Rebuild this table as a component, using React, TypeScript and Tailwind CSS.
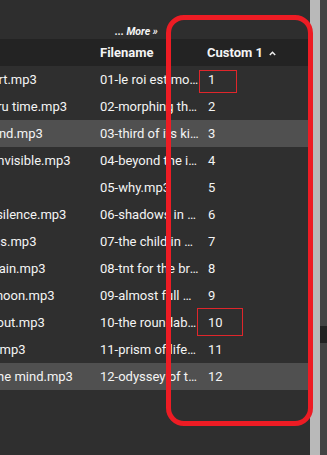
const tracks = [
  { name: "01-le roi est mort.mp3", n: 1 },
  { name: "02-morphing thru time.mp3", n: 2 },
  { name: "03-third of its kind.mp3", n: 3, active: true },
  { name: "04-beyond the invisible.mp3", n: 4 },
  { name: "05-why.mp3", n: 5 },
  { name: "06-shadows in silence.mp3", n: 6 },
  { name: "07-the child in us.mp3", n: 7 },
  { name: "08-tnt for the brain.mp3", n: 8 },
  { name: "09-almost full moon.mp3", n: 9 },
  { name: "10-the roundabout.mp3", n: 10 },
  { name: "11-prism of life.mp3", n: 11 },
  { name: "12-odyssey of the mind.mp3", n: 12, active: true },
];

const CaretUp = () => (
  <svg width="7" height="5" viewBox="0 0 7 5" className="ml-[6px] mt-[1px]">
    <polyline points="0.8,4 3.5,1.3 6.2,4" fill="none" stroke="#f2f2f2" strokeWidth="1.4" />
  </svg>
);

const App = () => {
  return (
    <div className="relative flex w-[327px] h-[455px] overflow-hidden bg-[#2f2f2f] font-['Roboto',sans-serif] text-[#f4f4f4]">
      <div className="flex flex-col w-[310px]">
        <div className="h-[39px] bg-[#2e2e2e] pl-[115px] pt-[18px]">
          <span className="text-[10.5px] leading-[12px] font-bold italic">... More »</span>
        </div>
        <div className="flex items-center h-[27px] bg-[#232323] text-[13px] font-bold">
          <div className="w-[100px]" />
          <div className="w-[107px]">Filename</div>
          <div className="flex items-center">
            Custom 1
            <CaretUp />
          </div>
        </div>
        {tracks.map((t) => (
          <div
            key={t.n}
            className={`flex items-center h-[27px] text-[13px] ${t.active ? "bg-[#505050]" : "bg-[#2f2f2f]"}`}
          >
            <div className="w-[100px] overflow-hidden whitespace-nowrap">
              <div className="ml-[-91px]">{t.name}</div>
            </div>
            <div className="w-[107px] pr-[8px] overflow-hidden whitespace-nowrap text-ellipsis">{t.name}</div>
            <div className="pl-[1px]">{t.n}</div>
          </div>
        ))}
      </div>
      <div className="w-[10px] bg-[#b9b9b9]" />
      <div className="flex flex-col w-[7px] bg-[#434343] pt-[326px]">
        <div className="h-[17px] bg-[#222222]" />
      </div>

      {/* markup boxes */}
      <div className="absolute left-[166px] top-[15px] w-[147px] h-[411px] border-[5px] border-[#ed1c24] rounded-[18px]" />
      <div className="absolute left-[199px] top-[70px] w-[38px] h-[23px] border border-[#e0262b]" />
      <div className="absolute left-[197px] top-[308px] w-[46px] h-[28px] border border-[#e0262b]" />
    </div>
  );
};

export default App;
